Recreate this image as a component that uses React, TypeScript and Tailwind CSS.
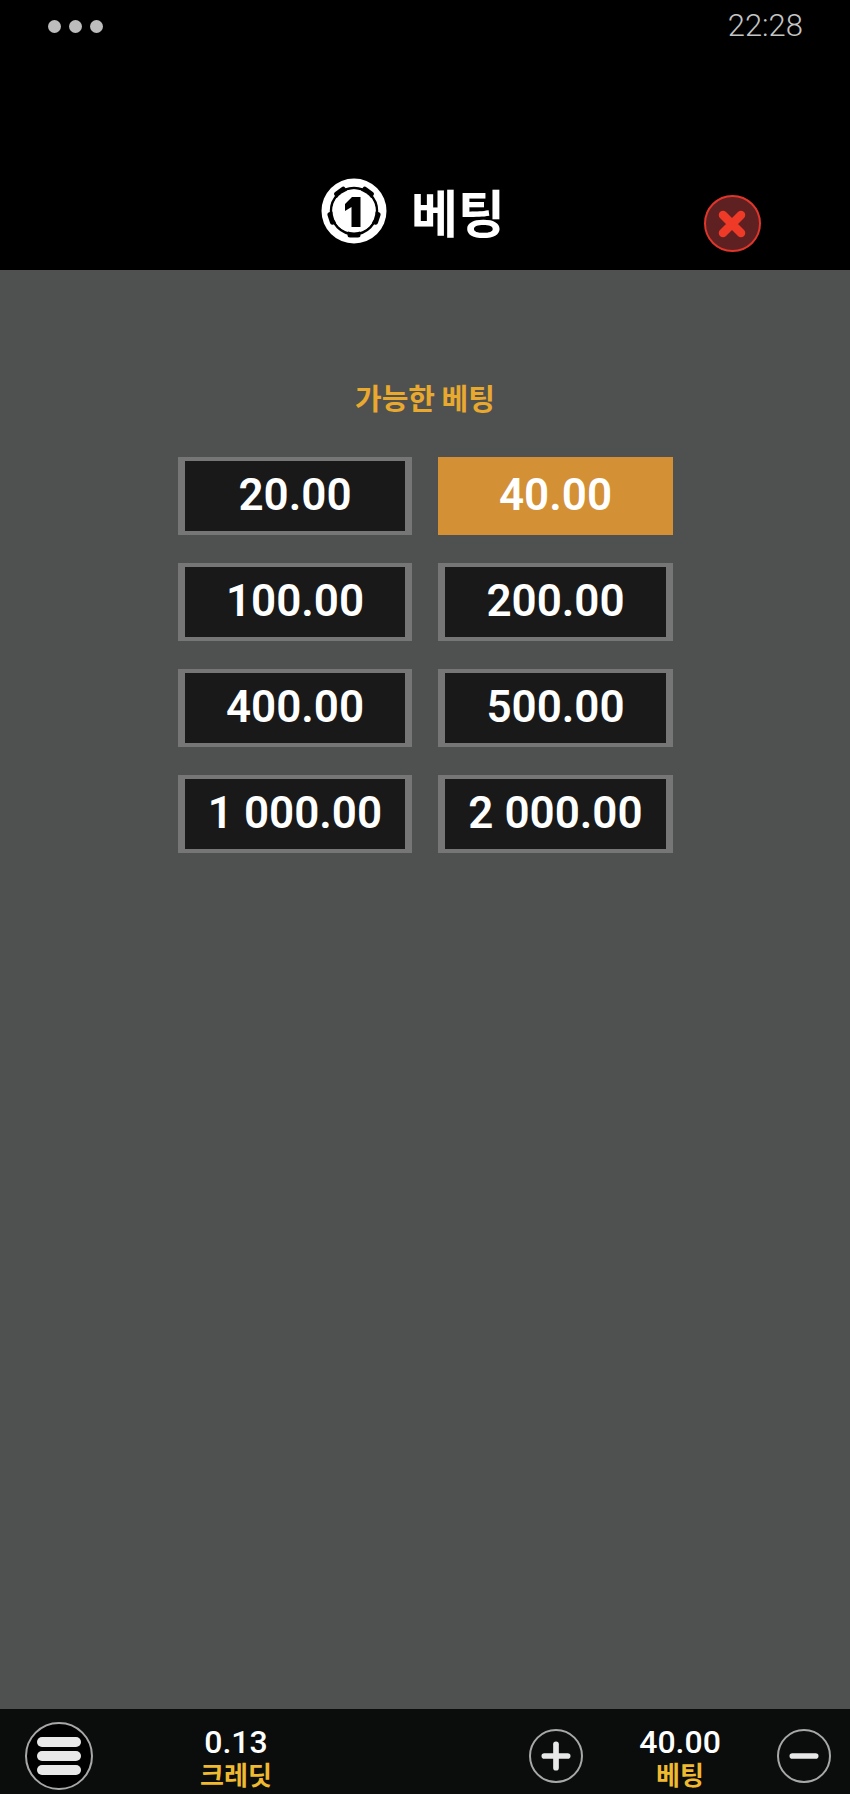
import { Minus, Plus } from 'lucide-react';

const betOptions = ['20.00', '40.00', '100.00', '200.00', '400.00', '500.00', '1 000.00', '2 000.00'];
const selectedBet = '40.00';

const ko = "font-['Noto_Sans_CJK_KR',sans-serif]";
const num = "font-['Roboto',sans-serif]";

function ChipIcon() {
  return (
    <svg viewBox="0 0 66 66" className="h-[66px] w-[66px]">
      <circle cx="33" cy="33" r="32.5" fill="#fff" />
      <circle cx="33" cy="33" r="23" fill="none" stroke="#000" strokeWidth="2.5" />
      {[36, 108, 180, 252, 324].map((angle) => (
        <rect
          key={angle}
          x="26.5"
          y="6.5"
          width="13"
          height="7"
          rx="2.5"
          fill="#000"
          transform={`rotate(${angle} 33 33)`}
        />
      ))}
      <circle cx="33" cy="33" r="21.5" fill="#fff" />
      <path d="M24 26 L31 19 H39.5 V49 H30.5 V29 L24 33 Z" fill="#000" />
    </svg>
  );
}

function CloseButton() {
  return (
    <button
      type="button"
      className="flex h-[57px] w-[57px] items-center justify-center rounded-full border-2 border-[#e0352a] bg-[#5e2020]"
    >
      <svg viewBox="0 0 32 32" className="h-[32px] w-[32px]">
        <path d="M7 7 L25 25 M25 7 L7 25" stroke="#f03a28" strokeWidth="8.5" strokeLinecap="round" />
      </svg>
    </button>
  );
}

function BetButton({ value }: { value: string }) {
  const selected = value === selectedBet;
  return (
    <button
      type="button"
      className={`flex h-[78px] items-center justify-center border-x-[7px] border-y-[4px] pb-[2px] text-[44px] font-semibold text-white ${num} ${
        selected ? 'border-[#d49035] bg-[#d49035]' : 'border-[#767676] bg-[#191919]'
      }`}
    >
      {value}
    </button>
  );
}

function FooterStat({ value, label }: { value: string; label: string }) {
  return (
    <div className="flex w-[80px] flex-col items-center">
      <span className={`text-[32px] leading-[34px] font-medium whitespace-nowrap text-white ${num}`}>{value}</span>
      <span className={`text-[26px] leading-[29px] font-bold whitespace-nowrap text-[#f0ba30] ${ko}`}>{label}</span>
    </div>
  );
}

function App() {
  return (
    <div className="flex h-[1794px] w-[850px] flex-col bg-black">
      <div className="flex h-[52px] shrink-0 items-center justify-between pr-[47px] pl-[48px]">
        <div className="flex gap-[8px]">
          <span className="h-[13px] w-[13px] rounded-full bg-[#bdbdbd]" />
          <span className="h-[13px] w-[13px] rounded-full bg-[#bdbdbd]" />
          <span className="h-[13px] w-[13px] rounded-full bg-[#bdbdbd]" />
        </div>
        <span className={`text-[31px] font-light text-[#c4c4c4] ${num}`}>22:28</span>
      </div>

      <div className="flex h-[218px] shrink-0 items-start pl-[321px]">
        <div className="mt-[126px] flex items-center gap-[24px]">
          <ChipIcon />
          <span className={`text-[51px] leading-[66px] font-bold text-white ${ko}`}>베팅</span>
        </div>
        <div className="mt-[143px] ml-[199px]">
          <CloseButton />
        </div>
      </div>

      <main className="flex flex-1 flex-col items-center bg-[#4f5150] pt-[107px]">
        <h2 className={`text-[29px] leading-[40px] font-bold text-[#e8a92e] ${ko}`}>가능한 베팅</h2>
        <div className="mt-[40px] ml-[1px] grid grid-cols-[234px_235px] gap-x-[26px] gap-y-[28px]">
          {betOptions.map((value) => (
            <BetButton key={value} value={value} />
          ))}
        </div>
      </main>

      <footer className="flex h-[85px] shrink-0 items-center bg-[#0b0c0c] pt-[9px]">
        <button
          type="button"
          className="ml-[25px] flex h-[68px] w-[68px] flex-col items-center justify-center gap-[4px] rounded-full border-2 border-[#a8a8a8] bg-black"
        >
          <span className="h-[10px] w-[44px] rounded-full bg-[#e8e8e8]" />
          <span className="h-[10px] w-[44px] rounded-full bg-[#e8e8e8]" />
          <span className="h-[10px] w-[44px] rounded-full bg-[#e8e8e8]" />
        </button>
        <div className="ml-[103px]">
          <FooterStat value="0.13" label="크레딧" />
        </div>
        <button
          type="button"
          className="ml-[253px] flex h-[54px] w-[54px] items-center justify-center rounded-full border-2 border-[#a8a8a8]"
        >
          <Plus className="h-[40px] w-[40px] text-[#e8e8e8]" strokeWidth={3.4} />
        </button>
        <div className="ml-[57px]">
          <FooterStat value="40.00" label="베팅" />
        </div>
        <button
          type="button"
          className="ml-[57px] flex h-[54px] w-[54px] items-center justify-center rounded-full border-2 border-[#a8a8a8]"
        >
          <Minus className="h-[40px] w-[40px] text-[#e8e8e8]" strokeWidth={3.4} />
        </button>
      </footer>
    </div>
  );
}

export default App;
